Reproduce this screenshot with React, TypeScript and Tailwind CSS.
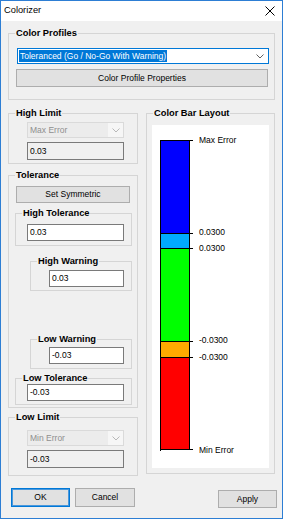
import React from "react";

function Chevron({ color }: { color: string }) {
  return (
    <svg width="8" height="5" viewBox="0 0 8 5" className="block">
      <polyline points="0.5,0.5 4,4 7.5,0.5" fill="none" stroke={color} strokeWidth="1" />
    </svg>
  );
}

function Group({
  label,
  className,
  children,
}: {
  label: string;
  className: string;
  children?: React.ReactNode;
}) {
  return (
    <div className={`relative border border-[#d5d5d5] flex flex-col shrink-0 ${className}`}>
      <span className="absolute left-[6px] top-[-7px] px-[1px] bg-[#f0f0f0] text-[9.3px] leading-[12px] font-bold whitespace-nowrap">
        {label}
      </span>
      {children}
    </div>
  );
}

function TextBox({ value, className, readOnly }: { value: string; className: string; readOnly?: boolean }) {
  return (
    <div
      className={`flex items-center pl-[2px] border border-[#7a7a7a] text-[8.5px] leading-none shrink-0 ${
        readOnly ? "bg-[#f0f0f0]" : "bg-white"
      } ${className}`}
    >
      {value}
    </div>
  );
}

function Btn({ label, className }: { label: string; className: string }) {
  return (
    <div
      className={`flex items-center justify-center bg-[#e1e1e1] border border-[#adadad] text-[8.5px] leading-none shrink-0 ${className}`}
    >
      {label}
    </div>
  );
}

function DisabledCombo({ value, className }: { value: string; className: string }) {
  return (
    <div className={`flex items-stretch border border-[#dadada] bg-[#ececec] shrink-0 ${className}`}>
      <div className="flex-1 flex items-center pl-[2px] text-[8.5px] leading-none text-[#8f8f8f]">{value}</div>
      <div className="w-[15px] bg-[#f6f6f6] flex items-center justify-center">
        <Chevron color="#b8b8b8" />
      </div>
    </div>
  );
}

function ColorBar() {
  const lines = [15.5, 108.5, 123.5, 216.5, 232.5, 324.5];
  const labels: [number, string][] = [
    [16, "Max Error"],
    [108, "0.0300"],
    [123.5, "0.0300"],
    [216, "-0.0300"],
    [232.5, "-0.0300"],
    [326, "Min Error"],
  ];
  return (
    <svg width="117" height="343" className="block">
      <rect x="8" y="15" width="30" height="93" fill="#0000ff" />
      <rect x="8" y="108" width="30" height="15" fill="#00aaff" />
      <rect x="8" y="123" width="30" height="93" fill="#00ff00" />
      <rect x="8" y="216" width="30" height="16" fill="#ffaa00" />
      <rect x="8" y="232" width="30" height="92" fill="#ff0000" />
      <line x1="8.5" y1="15" x2="8.5" y2="326" stroke="#000" strokeWidth="1" />
      <line x1="37.5" y1="15" x2="37.5" y2="325" stroke="#000" strokeWidth="1" />
      {lines.map((y) => (
        <line key={y} x1="8" y1={y} x2="41" y2={y} stroke="#000" strokeWidth="1" />
      ))}
      {labels.map(([y, t], i) => (
        <text
          key={i}
          x="47"
          y={y}
          dominantBaseline="middle"
          fontSize="8.5"
          fontFamily="'Liberation Sans', Arial, sans-serif"
          fill="#000"
        >
          {t}
        </text>
      ))}
    </svg>
  );
}

export default function App() {
  return (
    <div className="w-[283px] h-[519px] flex flex-col border border-[#2d7ed4] bg-[#f0f0f0] font-['Liberation_Sans',Arial,sans-serif] text-black overflow-hidden">
      {/* Title bar */}
      <div className="h-[20px] shrink-0 bg-white flex items-center justify-between pl-[3px] pr-[7px]">
        <span className="text-[9.3px] leading-none">Colorizer</span>
        <svg width="10" height="10" viewBox="0 0 10 10" className="block">
          <line x1="0.5" y1="0.5" x2="9.5" y2="9.5" stroke="#000" strokeWidth="1" />
          <line x1="9.5" y1="0.5" x2="0.5" y2="9.5" stroke="#000" strokeWidth="1" />
        </svg>
      </div>

      {/* Body */}
      <div className="flex flex-col px-[7px]">
        <Group label="Color Profiles" className="mt-[12px] h-[67px] w-[267px]">
          <div className="ml-[8px] mt-[14px] w-[252px] h-[16px] bg-white border border-[#0078d7] flex items-center justify-between pl-[1px] pr-[4px]">
            <span className="bg-[#0078d7] text-white text-[8.5px] leading-[12px] px-[1px]">
              Toleranced (Go / No-Go With Warning)
            </span>
            <Chevron color="#606060" />
          </div>
          <Btn label="Color Profile Properties" className="ml-[7px] mt-[5px] w-[252px] h-[18px]" />
        </Group>

        <div className="flex items-start mt-[13px] gap-[8px]">
          {/* Left column */}
          <div className="flex flex-col w-[130px]">
            <Group label="High Limit" className="h-[51px] w-[130px]">
              <DisabledCombo value="Max Error" className="ml-[18px] mt-[8px] w-[97px] h-[16px]" />
              <TextBox value="0.03" readOnly className="ml-[18px] mt-[4px] w-[97px] h-[18px]" />
            </Group>

            <Group label="Tolerance" className="mt-[11px] h-[233px] w-[130px]">
              <Btn label="Set Symmetric" className="ml-[7px] mt-[10px] w-[114px] h-[17px]" />
              <Group label="High Tolerance" className="ml-[6px] mt-[10px] w-[117px] h-[33px]">
                <TextBox value="0.03" className="ml-[11px] mt-[10px] w-[97px] h-[17px]" />
              </Group>
              <Group label="High Warning" className="ml-[21px] mt-[15px] w-[102px] h-[30px]">
                <TextBox value="0.03" className="ml-[18px] mt-[8px] w-[75px] h-[17px]" />
              </Group>
              <Group label="Low Warning" className="ml-[21px] mt-[48px] w-[102px] h-[30px]">
                <TextBox value="-0.03" className="ml-[18px] mt-[7px] w-[75px] h-[17px]" />
              </Group>
              <Group label="Low Tolerance" className="ml-[6px] mt-[9px] w-[117px] h-[27px]">
                <TextBox value="-0.03" className="ml-[11px] mt-[5px] w-[97px] h-[17px]" />
              </Group>
            </Group>

            <Group label="Low Limit" className="mt-[9px] h-[59px] w-[130px]">
              <DisabledCombo value="Min Error" className="ml-[18px] mt-[12px] w-[97px] h-[16px]" />
              <TextBox value="-0.03" readOnly className="ml-[18px] mt-[4px] w-[97px] h-[18px]" />
            </Group>
          </div>

          {/* Right column */}
          <Group label="Color Bar Layout" className="h-[361px] w-[129px]">
            <div className="ml-[5px] mt-[11px] w-[117px] h-[343px] bg-white">
              <ColorBar />
            </div>
          </Group>
        </div>

        {/* Buttons */}
        <div className="flex items-start mt-[12px]">
          <Btn
            label="OK"
            className="ml-[3px] w-[59px] h-[19px] !border-[#0078d7] shadow-[inset_0_0_0_1px_#4a98dc]"
          />
          <Btn label="Cancel" className="ml-[5px] w-[60px] h-[19px]" />
          <Btn label="Apply" className="ml-auto mr-[-2px] mt-[2px] w-[59px] h-[18px]" />
        </div>
      </div>
    </div>
  );
}
